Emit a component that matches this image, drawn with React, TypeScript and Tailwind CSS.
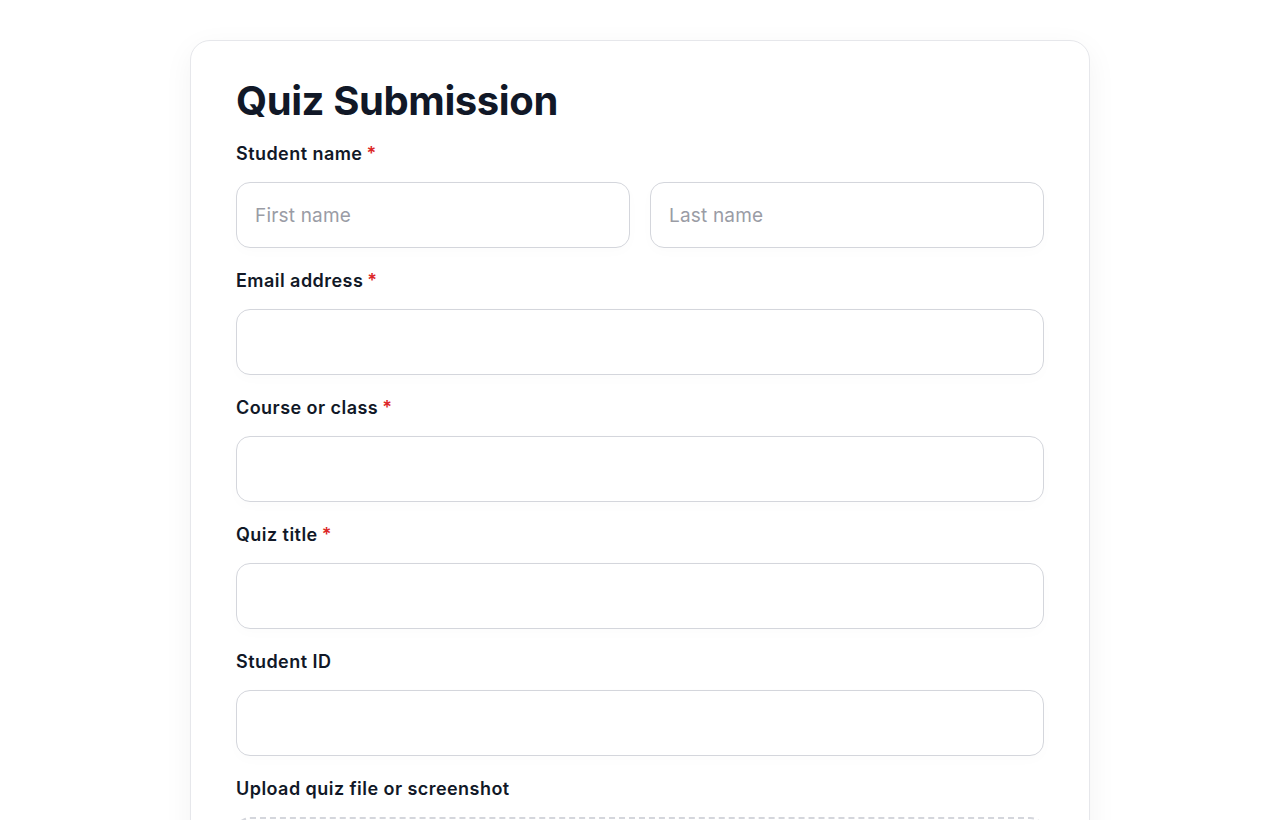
import React from "react";

function Label({ text, required }: { text: string; required?: boolean }) {
  return (
    <label className="block text-[18px] leading-[24px] font-semibold tracking-[0.025em] text-[#111827] mb-4">
      {text}
      {required && <span className="text-[#dc2626] ml-[4px]">*</span>}
    </label>
  );
}

function Input({ placeholder }: { placeholder?: string }) {
  return (
    <input
      type="text"
      placeholder={placeholder}
      className="block w-full h-[66px] rounded-[14px] border border-[#d4d6dc] bg-white px-[18px] text-[19px] tracking-[0.01em] text-[#111827] placeholder:text-[#9a9ca5] outline-none shadow-[0_4px_14px_rgba(0,0,0,0.015)]"
    />
  );
}

export default function App() {
  return (
    <div className="min-h-screen bg-white pt-10" style={{ fontFamily: "Inter, 'Noto Sans', sans-serif" }}>
      <div className="mx-auto w-[900px] rounded-[20px] border border-[#e6e7eb] bg-white px-[45px] pt-[40px] pb-10 shadow-[0_8px_30px_rgba(0,0,0,0.05)]">
        <h1 className="text-[40px] leading-[40px] font-bold tracking-[-0.01em] text-[#111827] mb-[21px]">Quiz Submission</h1>
        <div className="flex flex-col gap-[21px]">
          <div>
            <Label text="Student name" required />
            <div className="grid grid-cols-2 gap-5">
              <Input placeholder="First name" />
              <Input placeholder="Last name" />
            </div>
          </div>
          <div>
            <Label text="Email address" required />
            <Input />
          </div>
          <div>
            <Label text="Course or class" required />
            <Input />
          </div>
          <div>
            <Label text="Quiz title" required />
            <Input />
          </div>
          <div>
            <Label text="Student ID" />
            <Input />
          </div>
          <div>
            <Label text="Upload quiz file or screenshot" />
            <div className="h-[160px] rounded-[14px] border-2 border-dashed border-[#d4d6dc] bg-white" />
          </div>
        </div>
      </div>
    </div>
  );
}
